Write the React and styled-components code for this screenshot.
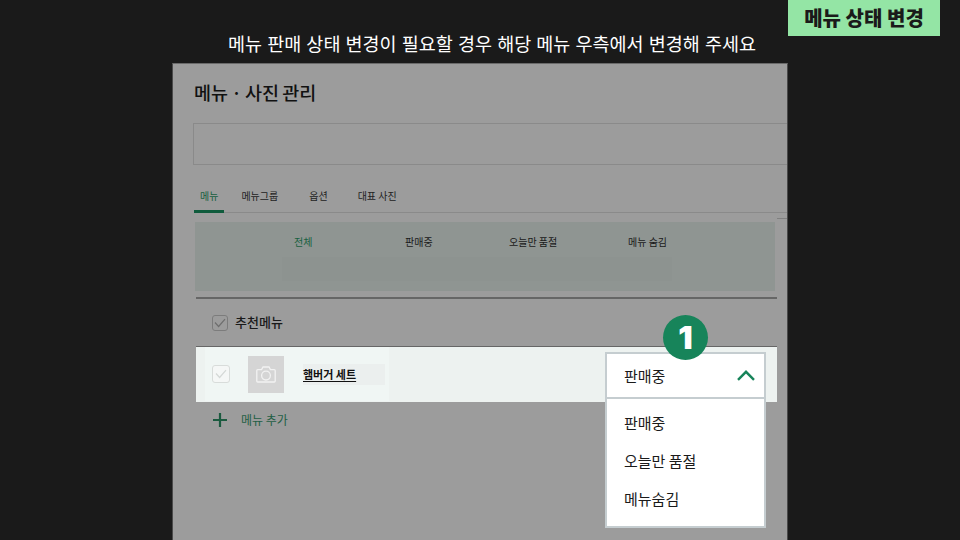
import styled, { createGlobalStyle } from "styled-components";

const GlobalStyle = createGlobalStyle`
  html, body {
    margin: 0;
    padding: 0;
    background: #1a1a1a;
    font-family: "Noto Sans CJK KR", "Noto Sans", sans-serif;
  }
  * { box-sizing: border-box; }
`;

const filters = [
  { label: "전체", width: 111, active: true },
  { label: "판매중", width: 104 },
  { label: "오늘만 품절", width: 119 },
  { label: "메뉴 숨김", width: 50 },
];

const tabs = [
  { label: "메뉴", gap: 0, active: true },
  { label: "메뉴그룹", gap: 11 },
  { label: "옵션", gap: 19 },
  { label: "대표 사진", gap: 18 },
];

const options = ["판매중", "오늘만 품절", "메뉴숨김"];

export default function App() {
  return (
    <Stage>
      <GlobalStyle />
      <Header>
        <Caption>메뉴 판매 상태 변경이 필요할 경우 해당 메뉴 우측에서 변경해 주세요</Caption>
        <Badge>메뉴 상태 변경</Badge>
      </Header>
      <Panel>
        <Title>메뉴 · 사진 관리</Title>
        <SearchBox />
        <Tabs>
          {tabs.map((t) => (
            <Tab key={t.label} $active={t.active} $gap={t.gap}>{t.label}</Tab>
          ))}
        </Tabs>
        <FilterBand>
          {filters.map((f) => (
            <Filter key={f.label} $active={f.active} $width={f.width}>{f.label}</Filter>
          ))}
          <FilterShade />
        </FilterBand>
        <Divider />
        <GroupRow>
          <GroupCheck>
            <CheckMark color="#6e6e6e" />
          </GroupCheck>
          <GroupLabel>추천메뉴</GroupLabel>
        </GroupRow>
        <MenuRow>
          <MenuInner>
            <MenuCheck>
              <CheckMark color="#d4d8d6" />
            </MenuCheck>
            <Thumb>
              <CameraIcon />
            </Thumb>
            <MenuName>햄버거 세트</MenuName>
          </MenuInner>
          <StepCircle>1</StepCircle>
          <Dropdown>
            <DropdownHead>
              <span>판매중</span>
              <Chevron />
            </DropdownHead>
            <DropdownList>
              {options.map((o) => (
                <DropdownItem key={o}>{o}</DropdownItem>
              ))}
            </DropdownList>
          </Dropdown>
        </MenuRow>
        <AddRow>
          <PlusIcon />
          <AddLabel>메뉴 추가</AddLabel>
        </AddRow>
      </Panel>
    </Stage>
  );
}

function CheckMark({ color }) {
  return (
    <svg width="12" height="10" viewBox="0 0 12 10" fill="none">
      <path d="M1 4.5 L4.6 8.5 L11 1.2" stroke={color} strokeWidth="1.2" />
    </svg>
  );
}

function CameraIcon() {
  return (
    <svg width="20" height="17" viewBox="0 0 20 17" fill="none" stroke="#f2f2f2" strokeWidth="1.3">
      <path d="M1.7 3.6 H5.6 L7 1 H13 L14.4 3.6 H18.3 Q19.2 3.6 19.2 4.5 V15 Q19.2 16 18.3 16 H1.7 Q0.8 16 0.8 15 V4.5 Q0.8 3.6 1.7 3.6 Z" />
      <circle cx="10" cy="9.6" r="4.4" />
    </svg>
  );
}

function Chevron() {
  return (
    <svg width="18" height="12" viewBox="0 0 18 12" fill="none">
      <path d="M1 9.8 L9 1.8 L17 9.8" stroke="#17845a" strokeWidth="2.4" />
    </svg>
  );
}

function PlusIcon() {
  return (
    <svg width="14" height="14" viewBox="0 0 14 14" fill="none">
      <path d="M7 0 V14 M0 7 H14" stroke="#1b5a3f" strokeWidth="2.2" />
    </svg>
  );
}

const Stage = styled.div`
  width: 960px;
  height: 540px;
  overflow: hidden;
  background: #1a1a1a;
`;

const Header = styled.div`
  display: grid;
  grid-template-columns: 172px 616px 152px;
  height: 63px;
`;

const Caption = styled.div`
  grid-column: 2;
  padding: 0 0 10px 56px;
  align-self: end;
  font-size: 18.5px;
  line-height: 20px;
  word-spacing: 1px;
  color: #ffffff;
  white-space: nowrap;
`;

const Badge = styled.div`
  grid-column: 3;
  height: 36px;
  background: #94e5a5;
  color: #1a1a1a;
  font-size: 20px;
  font-weight: 900;
  line-height: 36px;
  text-align: center;
  white-space: nowrap;
`;

const Panel = styled.div`
  margin-left: 172px;
  width: 616px;
  height: 477px;
  background: #9c9c9c;
  border-left: 1px solid #4a4a4a;
  border-right: 1px solid #4a4a4a;
  border-top: 1px solid #6a6a6a;
  overflow: hidden;
`;

const Title = styled.h1`
  margin: 15px 0 0 21px;
  font-size: 18.5px;
  font-weight: 500;
  line-height: 26px;
  word-spacing: -1px;
  color: #111;
  white-space: nowrap;
`;

const SearchBox = styled.div`
  margin: 18px 0 0 20px;
  height: 42px;
  border: 1px solid #8a8a8a;
  border-right: none;
`;

const Tabs = styled.div`
  display: flex;
  margin: 22px 0 0 21px;
  height: 26px;
  border-bottom: 1px solid #8a8a8a;
`;

const Tab = styled.div`
  margin-left: ${(p) => p.$gap}px;
  padding: 0 6px;
  height: 26px;
  border-bottom: ${(p) => (p.$active ? "3px solid #0f5b3c" : "none")};
  font-size: 10px;
  line-height: 18px;
  color: ${(p) => (p.$active ? "#176040" : "#222")};
  white-space: nowrap;
`;

const FilterBand = styled.div`
  position: relative;
  display: flex;
  margin: 9px 0 0 22px;
  padding-left: 99px;
  width: 580px;
  height: 69px;
  background: #8f9592;

  &::after {
    content: "";
    position: absolute;
    left: 582px;
    top: -4px;
    width: 10px;
    height: 1px;
    background: #808080;
  }
`;

const Filter = styled.div`
  position: relative;
  z-index: 1;
  width: ${(p) => p.$width}px;
  font-size: 10px;
  line-height: 40px;
  color: ${(p) => (p.$active ? "#176040" : "#1a1a1a")};
  white-space: nowrap;
`;

const FilterShade = styled.div`
  position: absolute;
  left: 87px;
  top: 35px;
  width: 390px;
  height: 24px;
  background: #8d9390;
`;

const Divider = styled.div`
  margin: 6px 0 0 23px;
  width: 581px;
  height: 2px;
  background: #666;
`;

const GroupRow = styled.div`
  display: flex;
  align-items: center;
  height: 47px;
  padding-left: 39px;
`;

const GroupCheck = styled.div`
  display: flex;
  align-items: center;
  justify-content: center;
  width: 16px;
  height: 16px;
  border: 1px solid #7c7c7c;
  border-radius: 3px;
`;

const GroupLabel = styled.span`
  margin-left: 7px;
  padding-bottom: 2px;
  font-size: 13px;
  font-weight: 500;
  color: #1a1a1a;
`;

const MenuRow = styled.div`
  position: relative;
  margin-left: 23px;
  width: 581px;
  height: 56px;
  background: #edf2f0;
  border-top: 1px solid #666;
`;

const MenuInner = styled.div`
  display: flex;
  align-items: center;
  margin-left: 9px;
  padding-left: 7px;
  width: 184px;
  height: 54px;
  background: #f0f6f4;
`;

const MenuCheck = styled.div`
  display: flex;
  align-items: center;
  justify-content: center;
  width: 18px;
  height: 18px;
  background: #f5f7f6;
  border: 1px solid #d8dcda;
  border-radius: 3px;
`;

const Thumb = styled.div`
  display: flex;
  align-items: center;
  justify-content: center;
  margin-left: 18px;
  width: 36px;
  height: 37px;
  background: #d5d5d5;
`;

const MenuName = styled.span`
  margin-left: 19px;
  padding: 2px 29px 3px 0;
  font-size: 11px;
  font-weight: 700;
  line-height: 16px;
  color: #111;
  background: #ebefee;
  text-decoration: underline;
  text-decoration-thickness: 1px;
  text-underline-offset: 2px;
  white-space: nowrap;
`;

const StepCircle = styled.div`
  position: absolute;
  z-index: 2;
  left: 467px;
  top: -32px;
  display: flex;
  align-items: center;
  justify-content: center;
  width: 45px;
  height: 45px;
  border-radius: 50%;
  background: #17845a;
  color: #fff;
  font-family: "Inter", sans-serif;
  font-size: 32px;
  font-weight: 900;
`;

const Dropdown = styled.div`
  position: absolute;
  z-index: 1;
  left: 409px;
  top: 5px;
  width: 161px;
  height: 176px;
  background: #fff;
  border: 2px solid #c5cdd0;
`;

const DropdownHead = styled.div`
  display: flex;
  align-items: center;
  justify-content: space-between;
  height: 45px;
  padding: 0 9px 0 17px;
  border-bottom: 2px solid #c5cdd0;
  font-size: 15px;
  color: #1a1a1a;
`;

const DropdownList = styled.div`
  padding-top: 5px;
`;

const DropdownItem = styled.div`
  height: 38px;
  padding-left: 17px;
  font-size: 15px;
  line-height: 38px;
  color: #1a1a1a;
`;

const AddRow = styled.div`
  display: flex;
  align-items: center;
  height: 36px;
  padding-left: 40px;
`;

const AddLabel = styled.span`
  margin-left: 14px;
  padding-bottom: 1px;
  font-size: 12px;
  color: #1f5f45;
  white-space: nowrap;
`;
